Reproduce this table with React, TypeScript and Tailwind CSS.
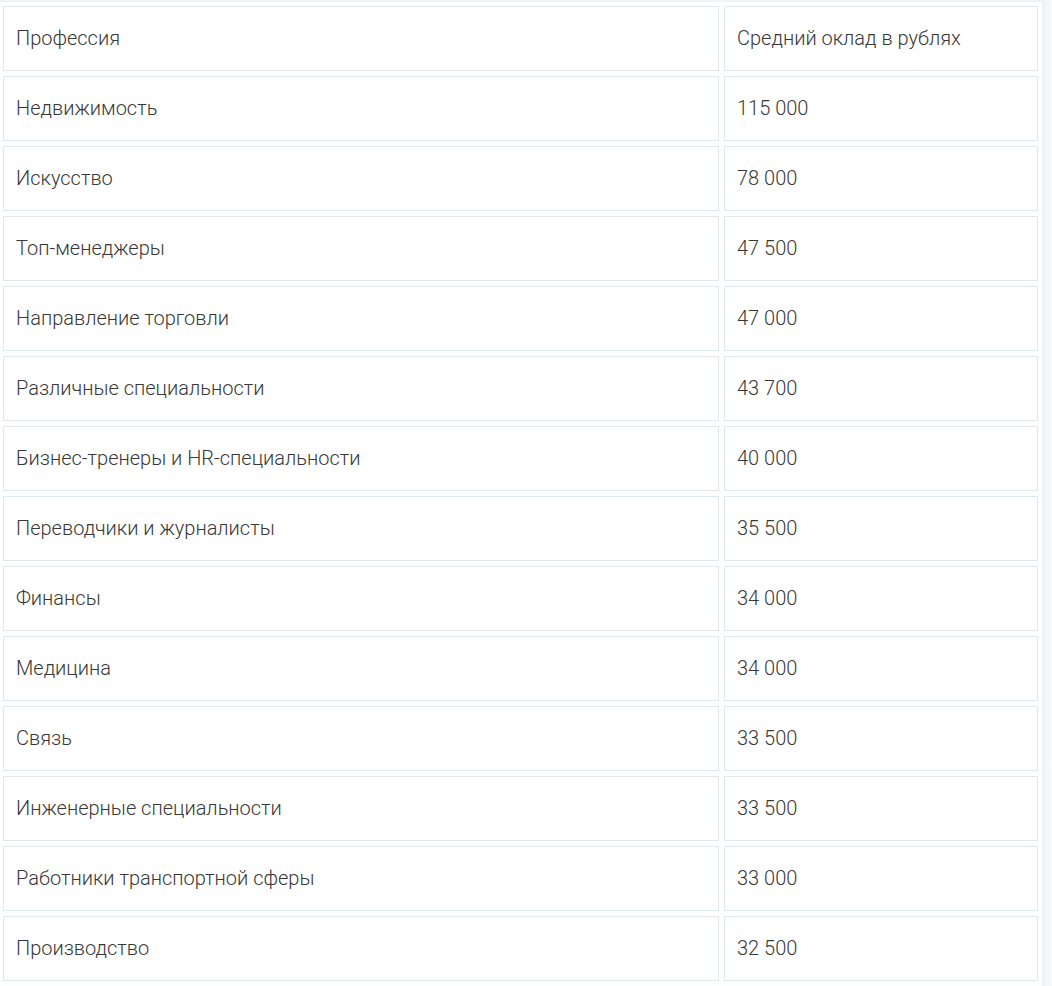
import React from "react";

const rows: [string, string][] = [
  ["Профессия", "Средний оклад в рублях"],
  ["Недвижимость", "115 000"],
  ["Искусство", "78 000"],
  ["Топ-менеджеры", "47 500"],
  ["Направление торговли", "47 000"],
  ["Различные специальности", "43 700"],
  ["Бизнес-тренеры и HR-специальности", "40 000"],
  ["Переводчики и журналисты", "35 500"],
  ["Финансы", "34 000"],
  ["Медицина", "34 000"],
  ["Связь", "33 500"],
  ["Инженерные специальности", "33 500"],
  ["Работники транспортной сферы", "33 000"],
  ["Производство", "32 500"],
];

export default function App() {
  return (
    <div
      className="w-[1052px] h-[986px] bg-white flex overflow-hidden"
      style={{ fontFamily: "Roboto, 'Noto Sans', sans-serif" }}
    >
      <div className="w-[1042px] flex flex-col">
        <div className="h-[2px] bg-[#f0f3f6]" />
        <div className="pl-[3px] pt-[4px] grid grid-cols-[716px_314px] gap-[5px]">
          {rows.map(([a, b], i) => (
            <React.Fragment key={i}>
              <div className="h-[65px] border border-[#dfe7ef] px-3 pb-[2px] flex items-center text-[20px] font-light text-[#383838]">
                {a}
              </div>
              <div className="h-[65px] border border-[#dfe7ef] px-3 pb-[2px] flex items-center text-[20px] font-light text-[#383838]">
                {b}
              </div>
            </React.Fragment>
          ))}
        </div>
      </div>
      <div className="w-[10px] bg-gradient-to-r from-[#eef1f5] to-[#f9fafc]" />
    </div>
  );
}
